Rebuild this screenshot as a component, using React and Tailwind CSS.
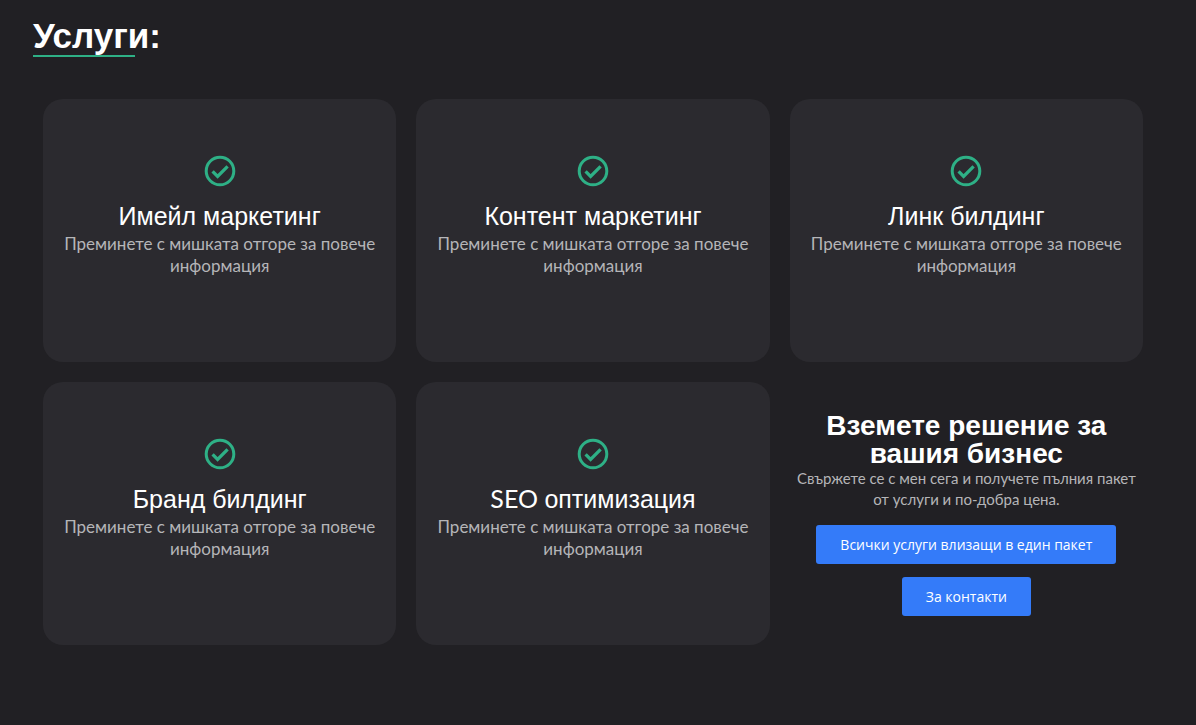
import React from 'react';

const services = [
  { id: 1, title: 'Имейл маркетинг' },
  { id: 2, title: 'Контент маркетинг' },
  { id: 3, title: 'Линк билдинг' },
  { id: 4, title: 'Бранд билдинг' },
  { id: 5, latin: 'SEO', title: 'оптимизация' },
];

const CheckIcon = () => (
  <svg viewBox="0 0 32 32" className="mx-auto size-8" fill="none" stroke="#2eb086" strokeWidth="3" aria-hidden="true">
    <circle cx="16" cy="16" r="13.8" />
    <path d="M8.6 16.4l5 5L23.6 11.4" strokeWidth="3.3" />
  </svg>
);

const ServiceCard = ({ latin, title }) => {
  return (
    <article className="min-h-[263px] rounded-[20px] bg-[#2b2a2f] px-4 pt-14 text-center">
      <CheckIcon />
      <h3 className="mt-3.5 h-8 font-['Liberation_Sans',sans-serif] text-[25px] leading-[30px] text-white">
        {latin && <span className="font-['Lato',sans-serif] leading-none">{latin} </span>}
        {title}
      </h3>
      <p className="font-['Lato',sans-serif] text-[17px] leading-[22px] text-[#b5b5b8]">
        Преминете с мишката отгоре за повече информация
      </p>
    </article>
  );
};

const App = () => {
  return (
    <main lang="bg" className="min-h-screen bg-[#212024] pt-4 pr-[43px] pb-20 pl-[33px]">
      <h2 className="inline-block font-['Liberation_Sans',sans-serif] text-[35px] leading-[39px] font-bold text-white">
        Услуги:
        <span className="block h-0.5 w-4/5 bg-[#2eb086]" />
      </h2>

      <div className="mt-[42px] grid grid-cols-3 gap-5 px-2.5">
        {services.map((service) => (
          <ServiceCard key={service.id} latin={service.latin} title={service.title} />
        ))}

        {/* Call to action */}
        <div className="flex flex-col items-center pt-[30px] text-center">
          <h3 className="px-5 font-['Liberation_Sans',sans-serif] text-[28px] leading-[28px] font-bold text-white">
            Вземете решение за вашия бизнес
          </h3>
          <p className="font-['Lato',sans-serif] text-[15px] leading-[21px] text-[#b5b5b8]">
            Свържете се с мен сега и получете пълния пакет от услуги и по-добра цена.
          </p>
          <a
            href="#package"
            className="mt-[15px] rounded-[3px] bg-[#347bf9] px-6 py-2 font-['Open_Sans',sans-serif] text-[14px] leading-[23px] text-white"
          >
            Всички услуги влизащи в един пакет
          </a>
          <a
            href="#contacts"
            className="mt-[13px] rounded-[3px] bg-[#347bf9] px-6 py-2 font-['Open_Sans',sans-serif] text-[14px] leading-[23px] text-white"
          >
            За контакти
          </a>
        </div>
      </div>
    </main>
  );
};

export default App;
